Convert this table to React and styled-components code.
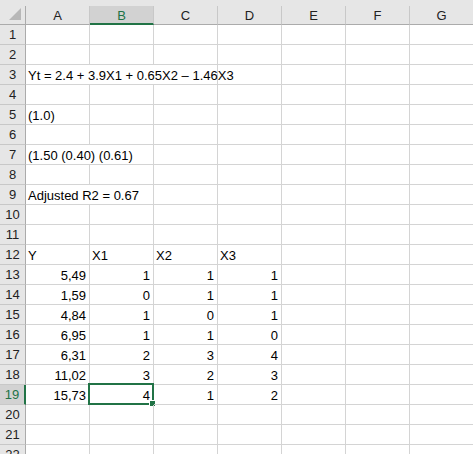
import React from 'react';
import styled, { createGlobalStyle, css } from 'styled-components';

const GlobalStyle = createGlobalStyle`
    html, body {
        margin: 0;
        padding: 0;
        background: #ffffff;
        overflow: hidden;
    }
    body {
        font-family: "Liberation Sans", Arial, sans-serif;
    }
`;

const COLS = ['A', 'B', 'C', 'D', 'E', 'F', 'G'];

// cells keyed by row number; each entry: [colIndex, text, align, span]
const DATA = {
    3: [[0, 'Yt = 2.4 + 3.9X1 + 0.65X2 \u2013 1.46X3', 'left', 3]],
    5: [[0, '(1.0)', 'left', 1]],
    7: [[0, '(1.50 (0.40) (0.61)', 'left', 2]],
    9: [[0, 'Adjusted R2 = 0.67', 'left', 2]],
    12: [[0, 'Y', 'left'], [1, 'X1', 'left'], [2, 'X2', 'left'], [3, 'X3', 'left']],
    13: [[0, '5,49'], [1, '1'], [2, '1'], [3, '1']],
    14: [[0, '1,59'], [1, '0'], [2, '1'], [3, '1']],
    15: [[0, '4,84'], [1, '1'], [2, '0'], [3, '1']],
    16: [[0, '6,95'], [1, '1'], [2, '1'], [3, '0']],
    17: [[0, '6,31'], [1, '2'], [2, '3'], [3, '4']],
    18: [[0, '11,02'], [1, '3'], [2, '2'], [3, '3']],
    19: [[0, '15,73'], [1, '4'], [2, '1'], [3, '2']],
};

const ACTIVE = { row: 19, col: 1 };

const buildRow = (r) => {
    const entries = DATA[r] || [];
    const cells = [];
    let c = 0;
    while (c < COLS.length) {
        const hit = entries.find((e) => e[0] === c);
        if (hit) {
            const span = hit[3] || 1;
            cells.push({ col: c, text: hit[1], align: hit[2] || 'right', span });
            c += span;
        } else {
            cells.push({ col: c, text: '', align: 'left', span: 1 });
            c += 1;
        }
    }
    return cells;
};

const Sheet = () => {
    const rows = Array.from({ length: 22 }, (_, i) => i + 1);
    return (
        <Frame>
            <TopStrip />
            <Grid>
                <Corner>
                    <CornerTriangle />
                </Corner>
                {COLS.map((c, i) => (
                    <ColHead key={c} $active={i === ACTIVE.col}>{c}</ColHead>
                ))}
                {rows.map((r) => (
                    <React.Fragment key={r}>
                        <RowHead $active={r === ACTIVE.row}>{r}</RowHead>
                        {buildRow(r).map((cell) => (
                            <Cell key={cell.col} $span={cell.span} $align={cell.align}>
                                {cell.text}
                                {r === ACTIVE.row && cell.col === ACTIVE.col && (
                                    <Selection>
                                        <Handle />
                                    </Selection>
                                )}
                            </Cell>
                        ))}
                    </React.Fragment>
                ))}
            </Grid>
        </Frame>
    );
};

export default function App() {
    return (
        <>
            <GlobalStyle />
            <Sheet />
        </>
    );
}

const Frame = styled.div`
    width: 473px;
    height: 454px;
    overflow: hidden;
    background: #ffffff;
`;

const TopStrip = styled.div`
    height: 6px;
    background: #e6e6e6;
`;

const Grid = styled.div`
    display: grid;
    grid-template-columns: 26px repeat(7, 64px);
    grid-template-rows: 19px repeat(22, 20px);
    width: 474px;
`;

const headBase = css`
    box-sizing: border-box;
    background: #e6e6e6;
    color: #222;
    font-size: 13px;
    display: flex;
    align-items: center;
    justify-content: center;
    position: relative;
`;

const Corner = styled.div`
    ${headBase};
    border-right: 1px solid #ababab;
    border-bottom: 1px solid #ababab;
`;

const CornerTriangle = styled.div`
    position: absolute;
    right: 4px;
    bottom: 4px;
    width: 0;
    height: 0;
    border-left: 12px solid transparent;
    border-bottom: 12px solid #b7b7b7;
`;

const ColHead = styled.div`
    ${headBase};
    border-right: 1px solid #c8c8c8;
    border-bottom: ${(p) => (p.$active ? '2px solid #217346' : '1px solid #ababab')};
    background: ${(p) => (p.$active ? '#d2d2d2' : '#e6e6e6')};
    color: ${(p) => (p.$active ? '#217346' : '#222')};
    padding-top: ${(p) => (p.$active ? '1px' : '0')};
`;

const RowHead = styled.div`
    ${headBase};
    border-bottom: 1px solid #c8c8c8;
    border-right: ${(p) => (p.$active ? '2px solid #217346' : '1px solid #ababab')};
    background: ${(p) => (p.$active ? '#d2d2d2' : '#e6e6e6')};
    color: ${(p) => (p.$active ? '#217346' : '#222')};
`;

const Cell = styled.div`
    box-sizing: border-box;
    grid-column: span ${(p) => p.$span};
    border-right: 1px solid #d4d4d4;
    border-bottom: 1px solid #d4d4d4;
    font-size: 13px;
    color: #000;
    white-space: nowrap;
    display: flex;
    align-items: center;
    justify-content: ${(p) => (p.$align === 'right' ? 'flex-end' : 'flex-start')};
    padding: 1px 3px 0 2px;
    position: relative;
`;

const Selection = styled.div`
    position: absolute;
    left: -2px;
    top: -2px;
    right: -1px;
    bottom: -1px;
    border: 2px solid #217346;
    pointer-events: none;
`;

const Handle = styled.div`
    position: absolute;
    right: -4px;
    bottom: -4px;
    width: 5px;
    height: 5px;
    background: #217346;
    border: 1px solid #ffffff;
`;
